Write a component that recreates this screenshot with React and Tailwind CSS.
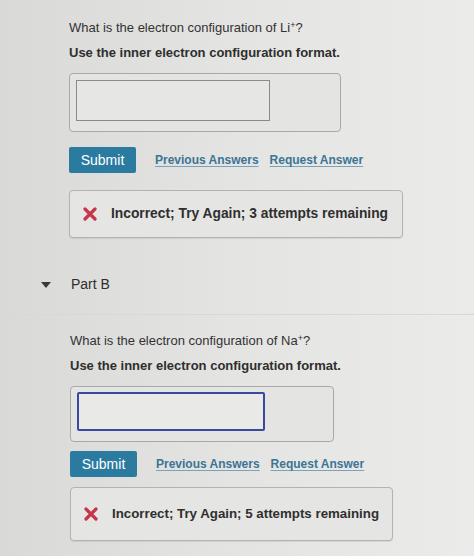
import React from "react";

function XIcon() {
  return (
    <svg width="14" height="14" viewBox="0 0 14 14" className="shrink-0">
      <path d="M2 2 L12 12 M12 2 L2 12" stroke="#c8344a" strokeWidth="3.2" strokeLinecap="round" />
    </svg>
  );
}

function Question({ ion, attempts, focused, boxW, boxH, submitGap, fbGap, feedbackW, feedbackH, small }) {
  return (
    <div className="flex flex-col">
      <div className="text-[13px] leading-[16px] text-[#333333]">
        What is the electron configuration of {ion}
        <sup className="text-[9px]">+</sup>?
      </div>
      <div className="mt-[9px] text-[13px] leading-[16px] font-bold text-[#2e2e2e]">
        Use the inner electron configuration format.
      </div>
      <div
        className="mt-[12px] rounded-[4px] border border-[#a9a9a7] bg-[#e4e4e2] pl-[6px] pt-[5px]"
        style={{ width: boxW, height: boxH }}
      >
        <div
          className={
            focused
              ? "h-[39px] w-[188px] rounded-[2px] border-2 border-[#3b48a0] bg-[#e9e9e7]"
              : "mt-[1px] h-[41px] w-[194px] border border-[#8a8a88] bg-[#e6e6e4]"
          }
        />
      </div>
      <div className="flex items-center" style={{ marginTop: submitGap }}>
        <div className="flex h-[26px] w-[67px] items-center justify-center rounded-[2px] bg-[#2b7ba0] text-[14px] text-white">
          Submit
        </div>
        <span className="ml-[19px] text-[12px] font-bold text-[#3a7596] underline decoration-[#7aa3bb] underline-offset-2">
          Previous Answers
        </span>
        <span className="ml-[11px] text-[12px] font-bold text-[#3a7596] underline decoration-[#7aa3bb] underline-offset-2">
          Request Answer
        </span>
      </div>
      <div
        className="flex items-center rounded-[4px] border border-[#b3b3b1] bg-[#e5e5e3] pl-[13px] shadow-[0_1px_1px_rgba(0,0,0,0.08)]"
        style={{ width: feedbackW, height: feedbackH, marginTop: fbGap }}
      >
        <XIcon />
        <span
          className={
            small
              ? "ml-[14px] whitespace-nowrap text-[13.3px] font-bold text-[#2f2f2f]"
              : "ml-[14px] whitespace-nowrap text-[13.8px] font-bold text-[#2f2f2f]"
          }
        >
          Incorrect; Try Again; {attempts} attempts remaining
        </span>
      </div>
    </div>
  );
}

export default function App() {
  return (
    <div
      className="h-[556px] w-[474px] overflow-hidden bg-gradient-to-r from-[#d9d9d7] via-[#e4e4e2] to-[#ebebe9]"
      style={{ fontFamily: '"Liberation Sans", Arial, sans-serif' }}
    >
      <div className="pl-[69px] pt-[20px]">
        <Question
          ion="Li"
          attempts={3}
          focused={false}
          boxW={272}
          boxH={59}
          submitGap={15}
          fbGap={17}
          feedbackW={334}
          feedbackH={48}
          small={false}
        />
      </div>
      <div className="mt-[17px] flex h-[60px] items-center border-b border-[#d8d8d6] pl-[40px]">
        <svg width="12" height="8" viewBox="0 0 12 8">
          <path d="M1 1 L11 1 L6 7 Z" fill="#3a3a3a" />
        </svg>
        <span className="ml-[19px] text-[14px] text-[#2e2e2e]">Part B</span>
      </div>
      <div className="pl-[70px] pt-[18px]">
        <Question
          ion="Na"
          attempts={5}
          focused={true}
          boxW={264}
          boxH={56}
          submitGap={9}
          fbGap={10}
          feedbackW={323}
          feedbackH={54}
          small={true}
        />
      </div>
    </div>
  );
}
